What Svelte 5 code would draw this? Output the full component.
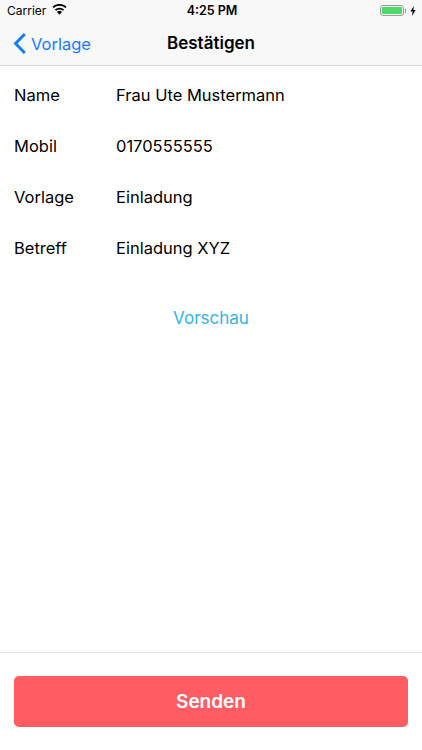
<script>
  const details = [
    { label: 'Name', value: 'Frau Ute Mustermann' },
    { label: 'Mobil', value: '0170555555' },
    { label: 'Vorlage', value: 'Einladung' },
    { label: 'Betreff', value: 'Einladung XYZ' }
  ];
</script>

<div class="screen">
  <header class="top">
    <div class="status">
      <div class="status-left">
        <span>Carrier</span>
        <svg class="wifi" width="15" height="11" viewBox="0 0 15 11">
          <path d="M7.5 10.8 L5 8 A3.6 3.6 0 0 1 10 8 Z" fill="#000" />
          <path d="M3.5 6.2 A5.8 5.8 0 0 1 11.5 6.2" fill="none" stroke="#000" stroke-width="1.8" />
          <path d="M1 3.4 A9.4 9.4 0 0 1 14 3.4" fill="none" stroke="#000" stroke-width="1.8" />
        </svg>
      </div>
      <span class="time">4:25 PM</span>
      <div class="status-right">
        <div class="battery"><div class="level"></div></div>
        <div class="cap"></div>
        <svg class="bolt" width="6" height="10" viewBox="0 0 6 10">
          <path d="M3.8 0 L0.4 5.6 H2.6 L2 10 L5.6 4 H3.3 Z" fill="#000" />
        </svg>
      </div>
    </div>
    <nav class="bar">
      <div class="back">
        <svg width="14" height="23" viewBox="0 0 14 23">
          <path d="M11.8 2 L2.6 11.5 L11.8 21" fill="none" stroke="#157efb" stroke-width="3" />
        </svg>
        <span>Vorlage</span>
      </div>
      <h1>Bestätigen</h1>
    </nav>
  </header>

  <main class="content">
    {#each details as row}
      <div class="row">
        <span class="label">{row.label}</span>
        <span class="value">{row.value}</span>
      </div>
    {/each}
    <div class="preview">Vorschau</div>
  </main>

  <footer class="bottom">
    <button class="send">Senden</button>
  </footer>
</div>

<style>
  :global(body) {
    margin: 0;
    background: #fff;
  }

  .screen {
    width: 422px;
    height: 750px;
    display: flex;
    flex-direction: column;
    font-family: Inter, "Liberation Sans", sans-serif;
    color: #000;
    overflow: hidden;
  }

  .top {
    height: 66px;
    box-sizing: border-box;
    background: #f8f8f8;
    border-bottom: 1px solid #d9d9d9;
  }

  .status {
    height: 21px;
    display: grid;
    grid-template-columns: 1fr auto 1fr;
    align-items: center;
    padding: 0 5px 0 7px;
    font-size: 12px;
  }

  .status-left {
    display: flex;
    align-items: center;
    gap: 6px;
  }

  .wifi {
    margin-top: -3px;
  }

  .time {
    font-weight: 600;
    font-size: 12.5px;
  }

  .status-right {
    display: flex;
    align-items: center;
    justify-content: flex-end;
  }

  .battery {
    width: 24px;
    height: 11px;
    box-sizing: border-box;
    border: 1px solid #9a9a9a;
    border-radius: 3px;
    padding: 1px;
  }

  .level {
    height: 100%;
    background: #4cd964;
    border-radius: 1px;
  }

  .cap {
    width: 1px;
    height: 4px;
    background: #9a9a9a;
    margin: 0 4px 0 1px;
  }

  .bolt {
    margin-right: 1px;
  }

  .bar {
    height: 44px;
    display: flex;
    align-items: center;
    justify-content: center;
    position: relative;
  }

  .back {
    position: absolute;
    left: 13px;
    top: 11px;
    display: flex;
    align-items: center;
    gap: 4px;
    color: #157efb;
    font-size: 16.5px;
  }

  h1 {
    margin: 0;
    font-size: 17px;
    font-weight: 600;
  }

  .content {
    flex: 1;
    padding-top: 3px;
  }

  .row {
    height: 51px;
    display: flex;
    align-items: center;
    padding-left: 14px;
    font-size: 16.5px;
  }

  .label {
    width: 102px;
  }

  .preview {
    margin-top: 35px;
    text-align: center;
    color: #34b5e5;
    font-size: 17px;
  }

  .bottom {
    height: 98px;
    box-sizing: border-box;
    border-top: 1px solid #e2e2e2;
    padding: 23px 14px 0;
  }

  .send {
    display: block;
    width: 100%;
    height: 51px;
    border: none;
    border-radius: 5px;
    background: #ff5c64;
    color: #fff;
    font-family: inherit;
    font-size: 19px;
    font-weight: 600;
  }
</style>
